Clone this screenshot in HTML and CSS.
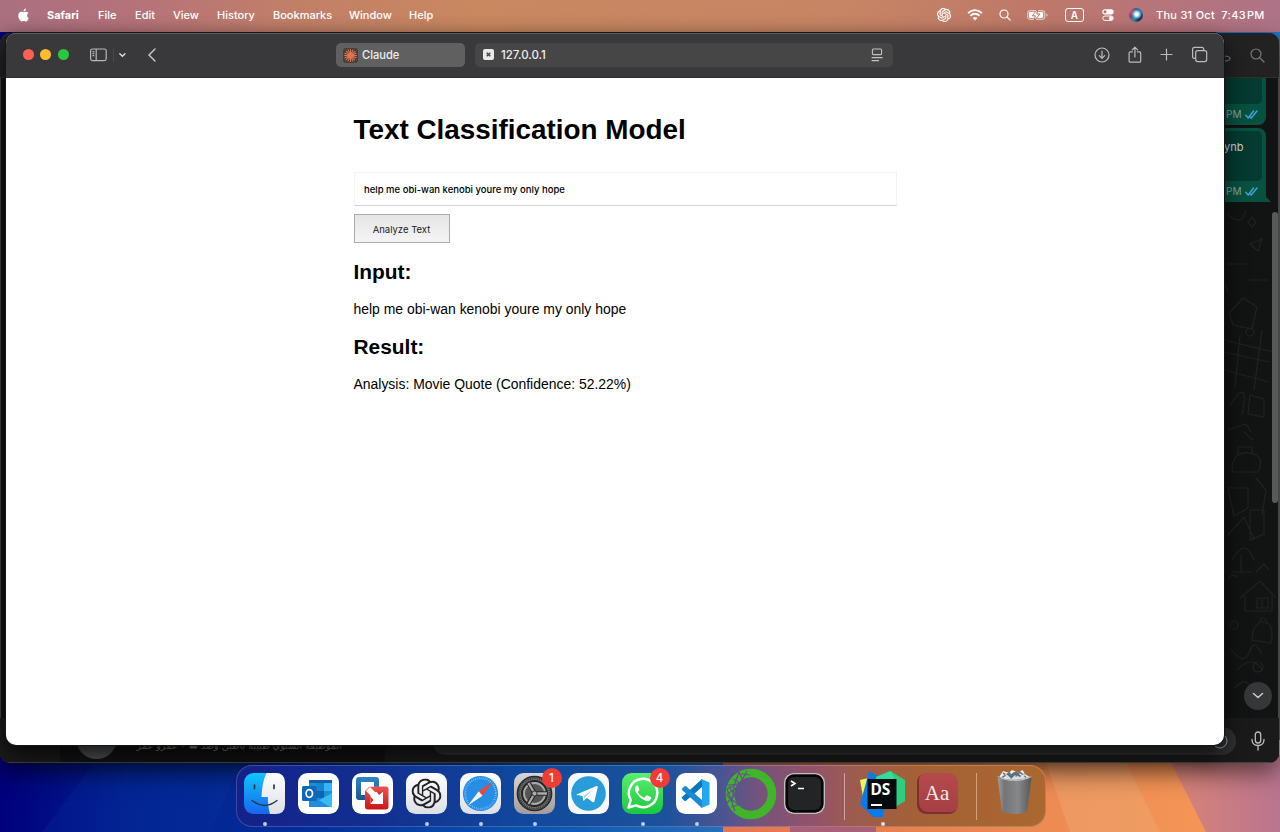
FILE: index.html
```html
<!DOCTYPE html>
<html lang="en">
<head>
<meta charset="utf-8">
<title>Text Classification Model</title>
<link rel="stylesheet" href="styles.css">
</head>
<body>
<svg width="0" height="0" class="defs">
  <defs>
    <symbol id="knot" viewBox="0 0 24 24"><path d="M22.2819 9.8211a5.9847 5.9847 0 0 0-.5157-4.9108 6.0462 6.0462 0 0 0-6.5098-2.9A6.0651 6.0651 0 0 0 4.9807 4.1818a5.9847 5.9847 0 0 0-3.9977 2.9 6.0462 6.0462 0 0 0 .7427 7.0966 5.98 5.98 0 0 0 .511 4.9107 6.051 6.051 0 0 0 6.5146 2.9001A5.9847 5.9847 0 0 0 13.2599 24a6.0557 6.0557 0 0 0 5.7718-4.2058 5.9894 5.9894 0 0 0 3.9977-2.9001 6.0557 6.0557 0 0 0-.7475-7.0729zm-9.022 12.6081a4.4755 4.4755 0 0 1-2.8764-1.0408l.1419-.0804 4.7783-2.7582a.7948.7948 0 0 0 .3927-.6813v-6.7369l2.02 1.1686a.071.071 0 0 1 .038.052v5.5826a4.504 4.504 0 0 1-4.4945 4.4944zm-9.6607-4.1254a4.4708 4.4708 0 0 1-.5346-3.0137l.142.0852 4.783 2.7582a.7712.7712 0 0 0 .7806 0l5.8428-3.3685v2.3324a.0804.0804 0 0 1-.0332.0615L9.74 19.9502a4.4992 4.4992 0 0 1-6.1408-1.6464zM2.3408 7.8956a4.485 4.485 0 0 1 2.3655-1.9728V11.6a.7664.7664 0 0 0 .3879.6765l5.8144 3.3543-2.0201 1.1685a.0757.0757 0 0 1-.071 0l-4.8303-2.7865A4.504 4.504 0 0 1 2.3408 7.872zm16.5963 3.8558L13.1038 8.364 15.1192 7.2a.0757.0757 0 0 1 .071 0l4.8303 2.7913a4.4944 4.4944 0 0 1-.6765 8.1042v-5.6772a.79.79 0 0 0-.407-.667zm2.0107-3.0231l-.142-.0852-4.7735-2.7818a.7759.7759 0 0 0-.7854 0L9.409 9.2297V6.8974a.0662.0662 0 0 1 .0284-.0615l4.8303-2.7866a4.4992 4.4992 0 0 1 6.6802 4.66zM8.3065 12.863l-2.02-1.1638a.0804.0804 0 0 1-.038-.0567V6.0742a4.4992 4.4992 0 0 1 7.3757-3.4537l-.142.0805L8.704 5.459a.7948.7948 0 0 0-.3927.6813zm1.0976-2.3654l2.602-1.4998 2.6069 1.4998v2.9994l-2.5974 1.4997-2.6067-1.4997Z"/></symbol>
    <symbol id="ticks" viewBox="0 0 13 9"><path d="M.8 5.2 3.2 8 8.6 1M5.4 7.2l.8.8L12 1" fill="none" stroke="#3fa4dc" stroke-width="1.4" stroke-linecap="round"/></symbol>
  </defs>
</svg>

<svg class="wallpaper" viewBox="0 0 1280 832">
  <defs>
    <linearGradient id="wb" x1="0" x2="1"><stop offset="0" stop-color="#00007c"/><stop offset=".1" stop-color="#022090"/><stop offset=".25" stop-color="#04309a"/><stop offset=".42" stop-color="#0a55b2"/><stop offset=".57" stop-color="#2870bc"/><stop offset="1" stop-color="#2870bc"/></linearGradient>
    <linearGradient id="wo" x1="0" x2="1"><stop offset="0" stop-color="#e87550"/><stop offset=".35" stop-color="#e88250"/><stop offset="1" stop-color="#f89a58"/></linearGradient>
    <linearGradient id="wp" x1="0" x2="1"><stop offset="0" stop-color="#db8474"/><stop offset="1" stop-color="#b97590"/></linearGradient>
  </defs>
  <rect width="1280" height="832" fill="url(#wb)"/>
  <path d="M42 832 100 755H245L210 832Z" fill="#0838a4" opacity=".22"/>
  <path d="M723 832V740H1280V832Z" fill="url(#wo)"/>
  <path d="M790 832V822H876V832Z" fill="#a86078"/>
  <path d="M1045 760H1125L1160 832H1070Z" fill="#eba66f" opacity=".5"/>
  <path d="M1167 755H1280V832H1206Z" fill="url(#wp)"/>
</svg>

<header class="menubar">
  <svg class="apple" viewBox="0 0 24 24"><path fill="#fff" d="M12.152 6.896c-.948 0-2.415-1.078-3.96-1.04-2.04.027-3.91 1.183-4.961 3.014-2.117 3.675-.546 9.103 1.519 12.09 1.013 1.454 2.208 3.09 3.792 3.039 1.52-.065 2.09-.987 3.935-.987 1.831 0 2.35.987 3.96.948 1.637-.026 2.676-1.48 3.676-2.948 1.156-1.688 1.636-3.325 1.662-3.415-.039-.013-3.182-1.221-3.22-4.857-.026-3.04 2.48-4.494 2.597-4.559-1.429-2.09-3.623-2.324-4.39-2.376-2-.156-3.675 1.09-4.61 1.09zM15.53 3.83c.843-1.012 1.4-2.427 1.245-3.83-1.207.052-2.662.805-3.532 1.818-.78.896-1.454 2.338-1.273 3.714 1.338.104 2.715-.688 3.559-1.701"/></svg>
  <nav class="menus"><b>Safari</b><span>File</span><span>Edit</span><span>View</span><span>History</span><span>Bookmarks</span><span>Window</span><span>Help</span></nav>
  <div class="status">
    <svg width="14" height="14" fill="#fff"><use href="#knot" stroke="#fff" stroke-width=".5"/></svg>
    <svg class="wifi" width="16" height="12" viewBox="0 0 16 12" fill="none" stroke="#fff" stroke-width="1.8"><path d="M1 4.200Q8-2 15 4.200M3.400 6.800q4.600-4 9.200 0"/><path d="M8 11.400 5.600 9q2.400-2 4.800 0Z" fill="#fff" stroke="none"/></svg>
    <svg class="find" width="12" height="12" viewBox="0 0 12 12" fill="none" stroke="#fff" stroke-width="1.2" stroke-linecap="round"><circle cx="5" cy="5" r="4"/><path d="m8 8 3.200 3.200"/></svg>
    <svg class="batt" width="21" height="12" viewBox="0 0 21 12"><rect x=".5" y="1.5" width="17.5" height="9" rx="2.6" fill="#fff" fill-opacity=".25" stroke="#fff" stroke-opacity=".5"/><rect x="2" y="3" width="14" height="6" rx="1.4" fill="#fff"/><path d="M19.400 4.500v3q1.200-.4 1.200-1.500t-1.200-1.500" fill="#fff" opacity=".6"/><path d="M10.800 0 5.300 6.800h3L7.200 12l5.700-6.900H9.800Z" fill="#fff" stroke="#b67159" stroke-width="1"/></svg>
    <span class="lang">A</span>
    <svg class="cc" width="12" height="12" viewBox="0 0 12 12"><rect x=".3" y=".2" width="11.4" height="5.2" rx="2.6" fill="#fff"/><circle cx="3" cy="2.8" r="1.5" fill="#ba715f"/><rect x=".8" y="7" width="10.4" height="4.4" rx="2.2" fill="none" stroke="#fff"/><circle cx="8.9" cy="9.2" r="2" fill="#fff"/></svg>
    <i class="siri"></i>
    <span class="clock">Thu 31 Oct&nbsp; 7:43&#8202;PM</span>
  </div>
</header>

<section class="chat">
  <div class="chat-top">
    <svg width="60" height="20" viewBox="0 0 60 20" fill="none" stroke="#777" stroke-width="1.2" stroke-linecap="round"><path d="M11 10q6 0 6 2.500T11 15"/><circle cx="43" cy="8" r="5"/><path d="m47 12 4 4"/></svg>
  </div>
  <div class="chat-main">
    <svg class="doodles" width="56" height="640" viewBox="1224 78 56 640" fill="none" stroke="#1f2322" stroke-width="1.2">
      <path d="M1228 215q15 12 18-5M1248 222l4-5 4 5-4 5zM1250 244l12-5-4 12zM1227 264h20M1248 280h20M1228 292l-3-8M1243 298l14 9-5 22-19-4-4-12z"/>
      <path d="M1224 340l50 12M1224 352l45 10M1224 370l45 12M1240 335l-5 52M1262 330l-8 60M1230 405q20-30 12 10M1250 395l14 4v18l-16-3zM1228 430l18-6 5 8M1244 432l9 8M1232 468q2-18 18-15t8 19h-25zM1238 454v-7h14v7M1228 488h20v20l-14 8zM1256 478l10 12-4 25M1228 535l16-18 10 22M1250 510v30l14-6V510zM1232 560q14-24 22 0M1241 555v17M1232 572h20"/>
      <path d="m1240 598 20-17 16 17M1245 596v15h27v-15M1257 598h11v10h-11zM1262 598v10M1256 572l8-8 5 6M1228 580q3-8 10-3M1252 640q1-18 12-18 11 2 7 21zM1260 622q1-8 7-1M1231 649q13 18 19 2 4-14 12 4M1237 670q15-16 25 0M1235 688q13-16 22 11M1238 90l9 14 8-8M1254 190l14 7"/>
      <circle cx="1234" cy="625" r="4"/><circle cx="1258" cy="667" r="5"/><circle cx="1250" cy="332" r="4"/>
    </svg>
    <div class="bubbles">
      <div class="bubble first"><div class="file"></div><p>PM <svg width="13" height="9"><use href="#ticks"/></svg></p></div>
      <div class="bubble second"><div class="file">ynb</div><p>PM <svg width="13" height="9"><use href="#ticks"/></svg></p></div>
    </div>
    <i class="scroll"></i>
    <div class="down"><svg width="12" height="8" viewBox="0 0 12 8" fill="none" stroke="#ccc" stroke-width="1.5" stroke-linecap="round"><path d="m1.500 1.500 4.500 4 4.500-4"/></svg></div>
  </div>
  <footer class="chat-foot">
    <div class="rail"></div>
    <div class="contact"><i></i><span dir="rtl">الموظيفة السنوي طبيبة باطين وصد ▬ ٠ عمرو عمر</span></div>
    <div class="compose"><div class="entry"><svg width="22" height="22" viewBox="0 0 22 22" fill="none" stroke="#aaa"><circle cx="8" cy="11" r="7"/></svg></div>
      <svg width="16" height="20" viewBox="0 0 16 20" fill="none" stroke="#bbb" stroke-width="1.3" stroke-linecap="round"><rect x="5.3" y="1" width="5.4" height="11" rx="2.7"/><path d="M2 8.500q0 6 6 6t6-6M8 14.500V19"/></svg></div>
  </footer>
</section>

<main class="safari">
  <div class="toolbar">
    <div class="lights"><i></i><i></i><i></i></div>
    <svg class="side" width="72" height="18" viewBox="0 0 72 18" fill="none" stroke="#b8b8ba" stroke-width="1.2"><rect x="1.6" y="3" width="15.6" height="11.6" rx="1.8"/><path d="M7.200 3v11.600M3.500 5.600h1.800M3.500 7.600h1.800M3.500 9.600h1.800"/><path d="M24.500 2v14" stroke="#48484a"/><path d="m30.800 7.800 2.600 2.500L36 7.800" stroke="#ddd" stroke-width="1.4" stroke-linecap="round"/><path d="m66 3-6 6 6 6" stroke="#ccc" stroke-width="1.4" stroke-linecap="round"/></svg>
    <div class="tab"><svg width="15" height="15" viewBox="-7.5 -7.5 15 15"><rect x="-7.5" y="-7.5" width="15" height="15" rx="3" fill="#463f3d"/><path stroke="#df7352" stroke-width="1.05" stroke-linecap="round" d="M0-6V6M-6 0H6M-4.200-4.400l8.400 8.800M-4.500 4.200l9-8.400M-2.300-5.600l4.600 11.200M-5.500 2.200l11-4.400M-5.600-2.300 5.600 2.300M2.400-5.500-2.400 5.500"/></svg>Claude</div>
    <div class="address"><svg width="11" height="11" viewBox="0 0 11 11"><rect width="11" height="11" rx="2" fill="#e9e9e9"/><path d="m3.700 3.700 3.600 3.600m0-3.600L3.700 7.300" stroke="#444" stroke-width="1.5"/></svg><span>127.0.0.1</span><svg class="reader" width="12" height="14" viewBox="0 0 12 14" fill="none" stroke="#c2c2c2" stroke-width="1.1"><rect x="1.4" y="1" width="9.2" height="5.6" rx="1"/><path d="M.6 9.600h11M.6 12.600H8"/></svg></div>
    <svg class="actions" width="116" height="20" viewBox="0 0 116 20" fill="none" stroke="#bcbcbe" stroke-width="1.2" stroke-linecap="round" stroke-linejoin="round"><circle cx="9" cy="10" r="7"/><path d="M9 6.200v7M6.300 10.700 9 13.400l2.700-2.700"/><path d="M39.400 6.800h-2q-1.300 0-1.300 1.300v7.800q0 1.300 1.300 1.300h9q1.300 0 1.300-1.300V8.100q0-1.300-1.300-1.300h-2M41.900 12V2.200M39.200 4.800l2.700-2.700 2.700 2.700"/><path d="M68 9.500h11M73.500 4v11"/><rect x="102.7" y="5.6" width="11" height="11" rx="2"/><path d="M102.500 13.300h-1q-1.900 0-1.900-1.900V4.300q0-1.900 1.900-1.900h7.300q1.900 0 1.900 1.900v1"/></svg>
  </div>
  <article class="page">
    <h1>Text Classification Model</h1>
    <div class="field">help me obi-wan kenobi youre my only hope</div>
    <button class="analyze">Analyze Text</button>
    <h2>Input:</h2>
    <p class="input-echo">help me obi-wan kenobi youre my only hope</p>
    <h2>Result:</h2>
    <p class="answer">Analysis: Movie Quote (Confidence: 52.22%)</p>
  </article>
</main>

<footer class="dock">
  <div class="app on"><svg viewBox="0 0 41 41"><defs><linearGradient id="fb" x2="0" y2="1"><stop stop-color="#10c5fc"/><stop offset="1" stop-color="#1767ed"/></linearGradient><linearGradient id="lt" x2="0" y2="1"><stop stop-color="#fff"/><stop offset="1" stop-color="#dcdfe6"/></linearGradient></defs><rect width="41" height="41" rx="9.5" fill="url(#fb)"/><path d="M22.500 0H31.500Q41 0 41 9.500V31.500Q41 41 31.500 41H26Q23.800 34 23.900 24H17.500Q18 9 22.500 0Z" fill="url(#lt)"/><path d="M10.500 12v3.500M30 12v3.500" stroke="#26384e" stroke-width="1.7" stroke-linecap="round"/><path d="M8 27.500q12.500 10 25 0" fill="none" stroke="#26384e" stroke-width="1.4" stroke-linecap="round"/></svg></div>
  <div class="app"><svg viewBox="0 0 41 41"><rect width="41" height="41" rx="9.5" fill="#fff"/><rect x="11" y="7" width="23" height="27" rx="1.5" fill="#1492dc"/><path d="M11 7h23v3H11z" fill="#155ea8"/><path d="M18 10h8v8h-8z" fill="#1784cf"/><path d="M26 10h8v8h-8z" fill="#34b5f5"/><path d="M18 18h8v7h-8z" fill="#1264b0"/><path d="m34 20-16 9v5h16z" fill="#38bcf2"/><path d="M11 21 32 34H11z" fill="#208ed8"/><rect x="4" y="13" width="14.5" height="15" rx="1.5" fill="#0d68bc"/><ellipse cx="11.3" cy="20.5" rx="3.2" ry="3.8" fill="none" stroke="#fff" stroke-width="1.7"/></svg></div>
  <div class="app"><svg viewBox="0 0 41 41"><defs><linearGradient id="vr" x2="0" y2="1"><stop stop-color="#f0524c"/><stop offset="1" stop-color="#c91618"/></linearGradient><linearGradient id="vb" x2="0" y2="1"><stop stop-color="#2f86c6"/><stop offset="1" stop-color="#1c558f"/></linearGradient></defs><rect width="41" height="41" rx="9.5" fill="#fff"/><rect x="4" y="4" width="23" height="23" rx="3" fill="url(#vb)"/><rect x="9" y="9" width="13" height="13" fill="#fff"/><rect x="13" y="13.5" width="23.5" height="23" rx="3" fill="url(#vr)"/><rect x="18.500" y="19" width="12.5" height="12" fill="#fff"/><path d="M9 9h13v4.500H16q-3 0-3 3V22H9Z" fill="#fff"/><path d="M13 22h-1v5h1zM22 13.500v-1h5v1Z" fill="url(#vb)"/><path d="m14 18 4-4 9.500 9.500-4 4Z" fill="#fff"/><path d="M9 9h13L9 22ZM31 19v12H18.500Z" fill="#fff"/><path d="M18.500 23.500v7l3-3.500ZM25 19h5.500L27 22Z" fill="#d92c2b"/></svg></div>
  <div class="app on"><svg viewBox="0 0 41 41"><rect width="41" height="41" rx="9.5" fill="url(#lt)"/><use href="#knot" x="5.5" y="5.5" width="30" height="30" fill="#222"/></svg></div>
  <div class="app on"><svg viewBox="0 0 41 41"><rect width="41" height="41" rx="9.5" fill="url(#lt)"/><circle cx="20.5" cy="20.5" r="17.6" fill="#278ee6"/><circle cx="20.5" cy="20.5" r="15.3" fill="none" stroke="#b8dcf8" stroke-width="2" stroke-dasharray=".5 1.5"/><path d="M33 8.500 18.700 18.300 22.500 22.700Z" fill="#f04438"/><path d="M8 32.500 18.700 18.300 22.500 22.700Z" fill="#f4f4f4"/></svg></div>
  <div class="app on"><svg viewBox="0 0 41 41"><defs><linearGradient id="gr" x2="0" y2="1"><stop stop-color="#d7d7d8"/><stop offset="1" stop-color="#a49b9b"/></linearGradient></defs><rect width="41" height="41" rx="9.5" fill="url(#gr)"/><circle cx="20.5" cy="20.5" r="17" fill="#777" stroke="#292929" stroke-width="1.7"/><circle cx="20.5" cy="20.5" r="15.2" fill="none" stroke="#333" stroke-width="2" stroke-dasharray="1 .9"/><circle cx="20.5" cy="20.5" r="12.5" fill="#555" stroke="#242424" stroke-width="2"/><circle cx="20.5" cy="20.5" r="10.5" fill="none" stroke="#aaa" stroke-width="1.8"/><path d="m20.500 20.500-5.500-10m5.500 10h12m-12 0-6 10" stroke="#292929" stroke-width="4.5"/><path d="m20.500 20.500-6-10.500m6 10.500h12.500m-12.500 0-6 10.500" stroke="#aaa" stroke-width="2.3"/><circle cx="20.5" cy="20.5" r="2.6" fill="#aaa" stroke="#292929"/></svg><b>1</b></div>
  <div class="app"><svg viewBox="0 0 41 41"><rect width="41" height="41" rx="9.5" fill="#f8f9fb"/><circle cx="20.5" cy="20.5" r="17.3" fill="#299cda"/><path d="M8.500 21.500 28.500 13q1.500-.4 1.200 1.500L26.500 28q-.4 2-2.300.8l-5.400-4.100-2.700 2.800-.8.200-.8-4.700-5.500-1.100q-1-.2-.5-.4" fill="#fff"/><path d="m15.500 22.700 9.700-6.100-8 7.500-.8 3z" fill="#acd1e8"/></svg></div>
  <div class="app on"><svg viewBox="0 0 41 41"><defs><linearGradient id="wg" x2="0" y2="1"><stop stop-color="#5cee70"/><stop offset="1" stop-color="#18c83d"/></linearGradient></defs><rect width="41" height="41" rx="9.5" fill="url(#wg)"/><path d="m6.500 34.500 2.200-7.500a14.200 14.200 0 1 1 5.400 5.400z" fill="none" stroke="#fff" stroke-width="2.5" stroke-linejoin="round"/><path d="M16 12.500q-1.400-.4-2.300 1.200-1.800 3 1 6.700 3.500 5 8.700 7.400 4.200 1.600 5.700-2 .4-1.300-.3-1.700l-3.500-1.700q-.8-.3-1.300.4l-1.300 1.600q-.5.4-1.200 0-3.800-1.800-5.500-5-.3-.6.3-1.100l1-1.300q.3-.5 0-1.100l-1.300-3Z" fill="#fff"/></svg><b>4</b></div>
  <div class="app on"><svg viewBox="0 0 41 41"><rect width="41" height="41" rx="9.5" fill="#fff"/><path d="M26 6v8L10 27.800q-.8.5-1.500 0l-2.400-2.200q-.8-.8 0-1.500Z" fill="#0875bd"/><path d="M26 35v-8L10 13.200q-.8-.5-1.500 0l-2.400 2.200q-.8.800 0 1.500Z" fill="#168bd2"/><path d="m25.500 6 8 3.500V31.500l-8 3.500-1.500-1.500q2 .5 2-1.500V9q0-2-2-1.500Z" fill="#24a5ee"/></svg></div>
  <div class="app large"><svg viewBox="0 0 52 52"><circle cx="26" cy="26" r="21" fill="none" stroke="#41b52a" stroke-width="8.6"/><path d="m2 17 14-1M1 27l13-9M2 35l10-11M10 43 2 21l16-8M14 4l-5 14-2 17M4 18l7 12M2 28l12 9M6 39l10-3M14 4l4 9M8 11l9 5M22 3l-6 11M25 7l-9-1" fill="none" stroke="#674f91" stroke-width="1.2"/></svg></div>
  <div class="app"><svg viewBox="0 0 41 41"><rect x=".8" y=".8" width="39.4" height="39.4" rx="9" fill="#222425" stroke="#c3bdc1" stroke-width="1.6"/><rect x="2.8" y="2.8" width="35.4" height="35.4" rx="7" fill="none" stroke="#050505" stroke-width="2.5"/><path d="m7 8 4 2.500L7 13M14 15.500h6" fill="none" stroke="#fff" stroke-width="1.6"/></svg></div>
  <i class="rule"></i>
  <div class="app large on ds"><svg viewBox="0 0 48 48"><path d="m1 10 13-3 4 17-14 3z" fill="#eff65a"/><path d="m10 1 19 11-5 35H14L1 34 7 13Z" fill="#087be8"/><path d="m17 7 14-6 15 9v21l-13 8H20Z" fill="#2ccf80"/><path d="M17 7 32 1l5 12H17Z" fill="#33dc9e"/><rect x="8.5" y="9" width="29" height="30" fill="#080b0d"/><path d="M12 34h11v2H12z" fill="#fff"/></svg><span>DS</span></div>
  <div class="app dict"><span>Aa</span></div>
  <i class="rule two"></i>
  <div class="app large trash"><svg viewBox="0 0 48 52"><defs><linearGradient id="tg" x2="1"><stop stop-color="#a0a1a3"/><stop offset=".2" stop-color="#737476"/><stop offset=".6" stop-color="#86888a"/><stop offset="1" stop-color="#555759"/></linearGradient></defs><path d="M7 8 11 2l6 2 4-3 6 3 5-3 4 5 5 3-7 5H12Z" fill="#eee"/><path d="m11 4 6 5 6-5 5 6 7-5M10 9l8-5 4 8 7-9 7 6" fill="none" stroke="#62737d" stroke-width="1.7"/><path d="M5 9q18 7 37 0L37.500 44q-1 5-14 5t-14-5Z" fill="url(#tg)"/><path d="M13 5q10 6 22 0l-2 7H16Z" fill="#ddd"/><path d="m16 5 4 4 5-5 5 4" fill="none" stroke="#526d7b" stroke-width="2"/><path d="M5 8q18 8 37 0" fill="none" stroke="#aaa"/></svg></div>
</footer>
</body>
</html>
```

FILE: styles.css
```css
* { box-sizing: border-box; }
body { margin: 0; width: 1280px; height: 832px; overflow: hidden; position: relative; font-family: Inter, "Liberation Sans", sans-serif; background: #000080; }
svg { display: block; flex: none; }
.defs { position: absolute; }
.wallpaper { position: absolute; inset: 0; width: 1280px; height: 832px; }

.menubar { position: absolute; inset: 0 0 auto; height: 32px; display: flex; align-items: center; padding: 0 15px 2px 17px; color: #fff; font-size: 11px; font-weight: 500; background: linear-gradient(90deg, #aa7080 0, #b5727a 10%, #c27f68 23%, #c98860 37%, #c78565 66%, #bf7968 80%, #b7747b 91%, #ad7387 100%); }
.apple { width: 13px; height: 14px; margin-right: 17px; }
.menus { display: grid; grid-template-columns: 51px 37px 38px 44px 56px 76px 60px 40px; line-height: 14px; white-space: nowrap; }
.menus b { font-weight: 700; }
.status { margin-left: auto; display: flex; align-items: center; }
.wifi { margin-left: 16px; }
.find { margin-left: 16px; }
.batt { margin-left: 16px; }
.lang { width: 19px; height: 14px; border: 1px solid #fff; border-radius: 3px; margin-left: 17px; text-align: center; font-size: 10px; line-height: 12px; font-weight: 600; }
.cc { margin-left: 18px; }
.siri { width: 14px; height: 14px; border-radius: 50%; margin-left: 15px; background: radial-gradient(circle at 55% 45%, #fff 0 12%, #6cc9d8 28%, transparent 46%), conic-gradient(#2c5f90, #2378ae, #2a3a70, #253060, #2a9a90, #8a3a80, #d84a70, #2c5f90); }
.clock { width: 109px; margin-left: 13px; white-space: nowrap; letter-spacing: .27px; }

.chat { position: absolute; left: 0; top: 33px; width: 1279px; height: 730px; border-radius: 10px; background: #111413; overflow: hidden; display: flex; flex-direction: column; box-shadow: 0 10px 24px #0008, inset 0 0 0 1px #444; }
.chat-top { height: 45px; flex: none; background: #222; display: flex; justify-content: flex-end; padding: 13px 14px 0 0; border-bottom: 1px solid #303030; }
.chat-top svg { width: 60px; margin-right: -8px; }
.chat-main { height: 640px; flex: none; padding-left: 1224px; position: relative; }
.doodles { position: absolute; left: 1224px; top: 0; }
.bubbles { position: relative; width: 42px; display: flex; flex-direction: column; gap: 3px; }
.bubble { background: #075141; color: #85a69b; font-size: 10px; }
.bubble p { margin: 0; padding-left: 2px; display: flex; align-items: center; gap: 4px; line-height: 13px; height: 13px; }
.file { background: #043a31; color: #d0d4d2; font-size: 11px; width: 38px; border-radius: 0 0 5px 0; }
.first { height: 47px; border-radius: 0 0 8px 0; }
.first .file { height: 26px; margin-bottom: 4px; }
.second { height: 74px; border-radius: 0 8px 0 0; padding-top: 3px; position: relative; }
.second::after { content: ""; position: absolute; right: -5px; bottom: 0; border-left: 6px solid #075141; border-top: 6px solid transparent; }
.second .file { height: 50px; padding-top: 9px; margin-bottom: 4px; border-radius: 0 5px 5px 0; }
.scroll { position: absolute; right: 1px; top: 134px; width: 6px; height: 291px; border-radius: 3px; background: #585a5a; }
.down { position: absolute; left: 1244px; top: 604px; width: 28px; height: 28px; border-radius: 50%; background: #363738; display: grid; place-items: center; }
.chat-foot { height: 45px; display: flex; background: #121212; border-bottom: 1px solid #424242; border-radius: 0 0 10px 10px; }
.rail { width: 60px; background: #1b1b1c; }
.contact { width: 326px; display: flex; }
.contact i { flex: none; width: 41px; height: 41px; background: #505153; border-radius: 50%; margin-left: 16px; }
.contact span { color: #888; font: 9.6px/18px "DejaVu Sans", sans-serif; width: 225px; margin: 19px 0 0; white-space: nowrap; height: 18px; }
.compose { flex: 1; display: flex; background: #1a1a1a; padding: 9px 13px 0 47px; }
.entry { width: 804px; height: 28px; border-radius: 14px; background: #303132; display: flex; justify-content: flex-end; padding: 3px 2px; margin-right: 14px; }
.compose > svg { margin-top: 4px; }

.safari { position: absolute; left: 5.5px; top: 33px; width: 1218.5px; height: 712px; border-radius: 10px; overflow: hidden; background: #fff; box-shadow: 0 0 0 1px #151515, 0 10px 22px #000b; }
.toolbar { height: 45px; background: #39393b; display: flex; align-items: center; padding: 0 15px 2px 17px; box-shadow: inset 0 1px #5c5c5e, inset 0 -1px #2d2d2f; }
.lights { display: flex; gap: 6.5px; width: 66.5px; }
.lights i { width: 11px; height: 11px; border-radius: 50%; background: #fe5f57; }
.lights i:nth-child(2) { background: #febc2e; }
.lights i:nth-child(3) { background: #28c840; }
.side { margin-right: 175px; }
.tab { width: 129px; height: 24px; border-radius: 5px; background: #606060; color: #eee; display: flex; align-items: center; gap: 4px; padding: 1px 0 0 7px; font-size: 11.1px; font-weight: 500; }
.address { width: 418px; height: 24px; border-radius: 5px; margin-left: 10px; background: #464646; color: #eee; display: flex; align-items: center; padding: 0 10px 0 8px; font-size: 11.5px; font-weight: 500; }
.address span { margin-left: 7px; padding-top: 1px; }
.reader { margin-left: auto; }
.actions { margin-left: auto; }
.page { width: 543px; margin: 0 0 0 348px; padding-top: 36px; font-family: "Liberation Sans", sans-serif; color: #000; }
h1 { font-size: 27.85px; line-height: 32px; margin: 0 0 26px; white-space: nowrap; }
.field { height: 34px; border: 1px solid #f3f3f3; border-bottom: 1.5px solid #d4d4d4; padding-left: 9.5px; font: 500 9.5px/34px Inter, sans-serif; white-space: nowrap; }
.analyze { display: block; width: 96px; height: 29px; margin: 8px 0 17px; padding: 1px 0 0; border: 1px solid #aaa; border-radius: 0; background: linear-gradient(#e5e5e5, #f5f5f5); font: 400 9.5px Inter, sans-serif; color: #222; }
h2 { font-size: 20.9px; line-height: 24px; margin: 0 0 17px; }
.page p { font-size: 13.95px; line-height: 16px; margin: 0 0 17.5px; white-space: nowrap; }

.dock { position: absolute; left: 235.5px; top: 765px; width: 810px; height: 62px; border-radius: 16px; border: 1px solid #ffffff30; display: flex; padding: 7px 0 0 1px; background: linear-gradient(90deg, #14218a 0, #123090 18%, #10489d 35%, #1c529c 53%, #4b5593 60%, #775379 65%, #92526a 71%, #9d5b50 76%, #a36136 84%, #ab672f 100%) border-box; }
.app { width: 54px; height: 53px; flex: none; display: flex; justify-content: center; position: relative; }
.app > svg { width: 41px; height: 41px; }
.app.on::after { content: ""; position: absolute; left: 25px; bottom: 0; width: 4px; height: 4px; border-radius: 50%; background: #b8cdf4; }
.app b { position: absolute; left: 34px; top: -5px; width: 20px; height: 20px; border-radius: 50%; background: #f33b35; color: #fff; font-size: 11.5px; font-weight: 500; line-height: 20px; text-align: center; }
.app.large > svg { width: 52px; height: 52px; margin-top: -5px; }
.rule { width: 1px; height: 47px; background: #d0a0a4; margin-left: 12px; flex: none; }
.rule.two { background: #d3a178; margin-left: 18px; }
.app.ds { margin-left: 11px; }
.app.ds > svg { width: 48px; height: 48px; margin-top: -3px; }
.ds span { position: absolute; left: 15px; top: 6px; color: #fff; font: 700 15.5px/20px "Noto Sans", sans-serif; }
.app.ds::after { background: #f3ded2; }
.app.dict { width: 41px; height: 41px; margin-left: 7px; border-radius: 9px; background: linear-gradient(#b54a4c, #a53f43); box-shadow: inset 2px -2px #7c3036; color: #f4e9e6; }
.dict span { font: 21px/40px "Liberation Serif", serif; }
.app.trash { margin-left: 11px; }
.app.trash > svg { width: 44px; height: 50px; margin-top: -5px; }
```
